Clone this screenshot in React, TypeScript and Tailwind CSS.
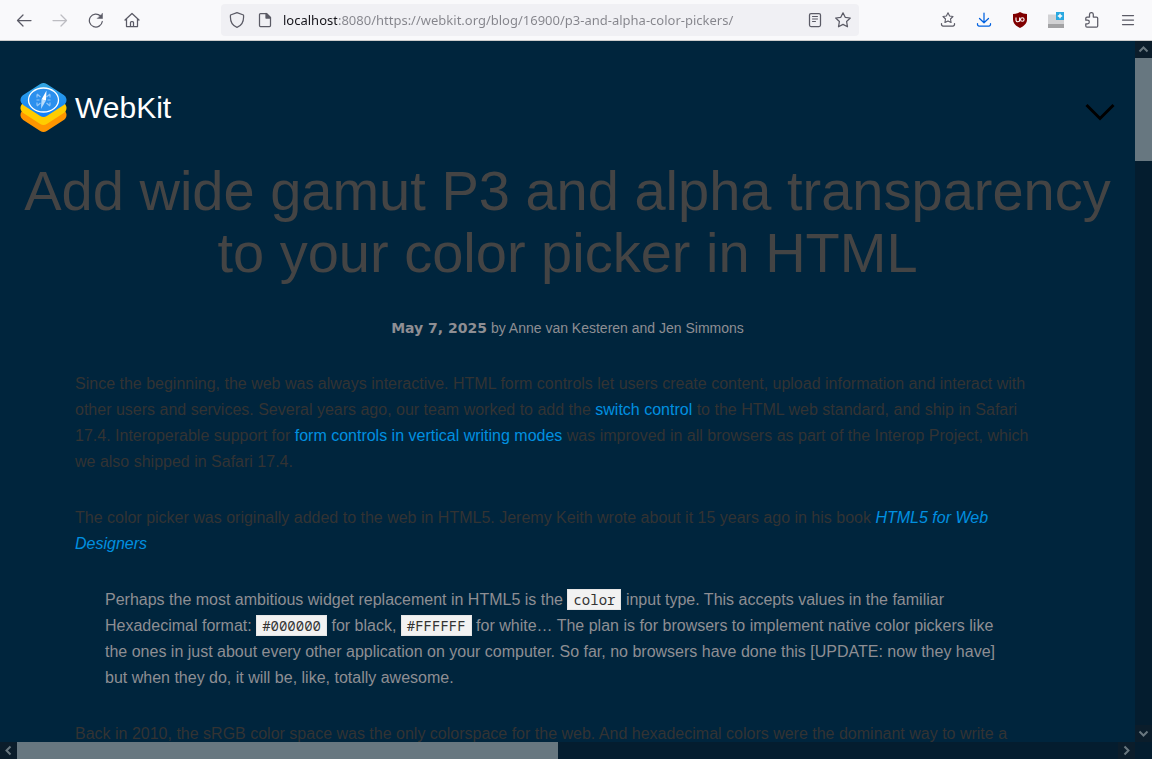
import React from 'react';

const LAYER = 'M23.500 7L40.500 18L23.500 29L6.500 18Z';

function WebKitLogo() {
  return (
    <svg viewBox="0 0 47 52" className="w-[47px] h-[52px] shrink-0" aria-hidden="true">
      <defs>
        <linearGradient id="sky" gradientUnits="userSpaceOnUse" x1="0" y1="0" x2="0" y2="36">
          <stop offset="0" stopColor="#35a8e0" />
          <stop offset="1" stopColor="#0a7bff" />
        </linearGradient>
      </defs>
      <g strokeWidth="12" strokeLinejoin="round">
        <path d={LAYER} transform="translate(0 15)" fill="#ff9500" stroke="#ff9500" />
        <path d={LAYER} transform="translate(0 8)" fill="#ffcc00" stroke="#ffcc00" />
        <path d={LAYER} fill="url(#sky)" stroke="url(#sky)" />
      </g>
      <ellipse cx="23.5" cy="18" rx="15" ry="12" fill="#2b90ee" stroke="#fff" strokeWidth="1.3" />
      <path
        d="M17 12l3.5 3M30 12l-3.5 3M17 24l3.5-3M30 24l-3.5-3M17 12.5v3M30 12.5v3M17 23.500v-3M30 23.500v-3M16.500 18h3M27.500 18h3"
        stroke="#8fc5f8"
        strokeWidth="1.2"
        fill="none"
      />
      <path d="M26.500 8.500L26 18.500L21.500 17.500Z" fill="#fff" />
      <path d="M21 27L21.500 17.500L26 18.500Z" fill="#b9dcfb" />
    </svg>
  );
}

type IconProps = { children: React.ReactNode; className?: string };

function Icon({ children, className = 'text-[#5b5b66]' }: IconProps) {
  return (
    <svg
      viewBox="0 0 16 16"
      className={`size-4 shrink-0 ${className}`}
      fill="none"
      stroke="currentColor"
      strokeWidth="1.25"
      strokeLinecap="round"
      strokeLinejoin="round"
      aria-hidden="true"
    >
      {children}
    </svg>
  );
}

function ToolButton({ label, children, disabled }: { label: string; children: React.ReactNode; disabled?: boolean }) {
  return (
    <button type="button" aria-label={label} title={label} disabled={disabled} className="flex size-8 items-center justify-center rounded">
      {children}
    </button>
  );
}

function Toolbar() {
  return (
    <header className="flex h-[41px] shrink-0 items-center border-b border-[#cccccc] bg-[#f9f9fb] px-2">
      <nav className="flex gap-1" aria-label="Navigation">
        <ToolButton label="Back">
          <Icon><path d="M15 8.500H1.500M7 3L1.500 8.500L7 14" /></Icon>
        </ToolButton>
        <ToolButton label="Forward" disabled>
          <Icon className="text-[#bdbdc2]"><path d="M1 8.500H14.500M9 3L14.500 8.500L9 14" /></Icon>
        </ToolButton>
        <ToolButton label="Reload">
          <Icon>
            <path d="M14.300 9.500A6.500 6.500 0 1 1 12.500 4" />
            <path d="M14.500 1.500V6.500H9.500Z" fill="currentColor" strokeWidth="0.5" />
          </Icon>
        </ToolButton>
        <ToolButton label="Home">
          <Icon>
            <path d="M1 8L8 1.500L15 8M2.500 7V14.500H13.500V7M6.500 14V10.500a1 1 0 0 1 1-1h1a1 1 0 0 1 1 1V14" />
          </Icon>
        </ToolButton>
      </nav>

      <div className="ml-[73px] flex h-8 w-[638px] min-w-0 shrink items-center rounded bg-[#f0f0f4] px-2">
        <Icon>
          <path d="M8 .7L14.500 3C15 8.500 13 13.500 8 15.300C3 13.500 1 8.500 1.500 3Z" />
        </Icon>
        <Icon className="ml-3 text-[#5b5b66]">
          <path d="M3.500 1.500H9.500L13.500 5.500V13.500a1 1 0 0 1-1 1H3.500a1 1 0 0 1-1-1V2.500a1 1 0 0 1 1-1Z" />
          <path d="M9 1.500V6H13.500Z" fill="currentColor" />
        </Icon>
        <input
          type="text"
          aria-label="Address"
          defaultValue="localhost:8080/https://webkit.org/blog/16900/p3-and-alpha-color-pickers/"
          className="ml-[10px] min-w-0 flex-1 bg-[linear-gradient(to_right,#15141a_54px,#84848b_54px)] bg-clip-text pt-[2px] font-['Noto_Sans',sans-serif] text-[13px] text-transparent caret-black outline-none"
        />
        <button type="button" aria-label="Reader view" className="flex size-7 items-center justify-center">
          <Icon>
            <rect x="2.500" y="1.500" width="11" height="13" rx="1.500" />
            <path d="M5.500 4.500H10.500M5.500 7H10.500M5.500 9.500H8.500" strokeWidth="1" />
          </Icon>
        </button>
        <button type="button" aria-label="Bookmark" className="-mr-[6px] flex size-7 items-center justify-center">
          <Icon>
            <path d="M8 .8L10.200 5.300L15.300 6L11.600 9.500L12.500 14.800L8 12.400L3.500 14.800L4.400 9.500L.7 6L5.800 5.300Z" />
          </Icon>
        </button>
      </div>

      <div className="ml-auto flex gap-1">
        <ToolButton label="Bookmarks">
          <Icon>
            <path d="M8 .8L9.600 4L13 4.500L10.500 7L11.100 10.500L8 8.900L4.900 10.500L5.500 7L3 4.500L6.400 4Z" strokeWidth="1.1" />
            <path d="M1.500 11.500V12.500a1.500 1.500 0 0 0 1.500 1.500H13a1.500 1.500 0 0 0 1.500-1.500V11.500" />
          </Icon>
        </ToolButton>
        <ToolButton label="Downloads">
          <Icon className="text-[#0061e0]">
            <path d="M8 1V10.500M3.500 6.500L8 10.800L12.500 6.500M1.500 11.500V12.500a1.500 1.500 0 0 0 1.500 1.500H13a1.500 1.500 0 0 0 1.500-1.500V11.500" />
          </Icon>
        </ToolButton>
        <ToolButton label="uBlock Origin">
          <svg viewBox="0 0 16 16" className="size-4" aria-hidden="true">
            <path d="M8 0C10 1.300 12.500 2 15 2V7.500C15 11.500 12 14 8 16C4 14 1 11.500 1 7.500V2C3.500 2 6 1.300 8 0Z" fill="#800000" />
            <path d="M4 5.500V8a1.600 1.600 0 0 0 3.600 0V5.500M7.600 5.500V9.400" fill="none" stroke="#fff" strokeWidth="1.100" />
            <circle cx="10.300" cy="7.500" r="1.800" fill="none" stroke="#fff" strokeWidth="1.100" />
          </svg>
        </ToolButton>
        <ToolButton label="New window">
          <svg viewBox="0 0 16 16" className="size-4" aria-hidden="true">
            <path d="M0 2.500H16V12H0Z" fill="#d2d2d4" />
            <path d="M0 12H16V16H0Z" fill="#a2a2a4" />
            <path d="M8 0H16V8H8Z" fill="#2aa8e0" />
            <path d="M12 1.800V6.200M9.800 4H14.200" stroke="#fff" strokeWidth="1.400" />
          </svg>
        </ToolButton>
        <ToolButton label="Extensions">
          <Icon>
            <path d="M5.500 5V2.500a1.900 1.900 0 0 1 3.800 0V5H12.500a1.200 1.200 0 0 1 1.200 1.200V14a1.200 1.200 0 0 1-1.200 1.200H3a1.200 1.200 0 0 1-1.200-1.200V11.800H3.500a1.700 1.700 0 0 0 0-3.600H1.800V6.200A1.200 1.200 0 0 1 3 5Z" />
          </Icon>
        </ToolButton>
        <ToolButton label="Menu">
          <Icon><path d="M2.500 3.500H13.500M2.500 8H13.500M2.500 12.500H13.500" /></Icon>
        </ToolButton>
      </div>
    </header>
  );
}

const ARROWS = {
  up: 'M4.500 10.500L8.500 6.500L12.500 10.500',
  down: 'M4.500 6.500L8.500 10.500L12.500 6.500',
  left: 'M10.500 4.500L6.500 8.500L10.500 12.500',
  right: 'M6.500 4.500L10.500 8.500L6.500 12.500',
};

function ScrollArrow({ dir }: { dir: keyof typeof ARROWS }) {
  return (
    <button type="button" aria-label={`Scroll ${dir}`} className="size-[17px] shrink-0 bg-[#0b1d2b]">
      <svg viewBox="0 0 17 17" className="size-full" fill="none" stroke="#69777f" strokeWidth="2" aria-hidden="true">
        <path d={ARROWS[dir]} />
      </svg>
    </button>
  );
}

function Code({ children }: { children: React.ReactNode }) {
  return (
    <code className="border border-[#e6e6e6] bg-[#f2f2f2] px-[5px] font-['Noto_Sans_Mono','DejaVu_Sans_Mono',monospace] text-[14px] leading-4 text-[#333333]">
      {children}
    </code>
  );
}

function TextLink({ children }: { children: React.ReactNode }) {
  return <a href="#" className="text-[#0090e0]">{children}</a>;
}

function Article() {
  return (
    <article>
      <h1 className="mt-[26px] px-5 text-center text-[56px] leading-[62px] text-[#444444]">
        Add wide gamut P3 and alpha transparency to your color picker in HTML
      </h1>
      <p className="mt-8 text-center text-[14px] leading-6 text-[#8e8e93]">
        <time className="font-['DejaVu_Sans',sans-serif] font-bold">May 7, 2025</time> by Anne van Kesteren and Jen Simmons
      </p>
      <div className="mt-[31px] max-w-[1035px] space-y-[30px] pl-[75px] text-[16px] leading-[26px] text-[#333333]">
        <p>
          Since the beginning, the web was always interactive. HTML form controls let users create content, upload
          information and interact with other users and services. Several years ago, our team worked to add
          the <TextLink>switch control</TextLink> to the HTML web standard, and ship in Safari 17.4. Interoperable
          support for <TextLink>form controls in vertical writing modes</TextLink> was improved in all browsers as part
          of the Interop Project, which we also shipped in Safari 17.4.
        </p>
        <p>
          The color picker was originally added to the web in HTML5. Jeremy Keith wrote about it 15 years ago in his
          book <TextLink><em>HTML5 for Web Designers</em></TextLink>
        </p>
        <blockquote className="px-[30px] text-[#8e8e93]">
          Perhaps the most ambitious widget replacement in HTML5 is the <Code>color</Code> input type. This accepts
          values in the familiar Hexadecimal format: <Code>#000000</Code> for black, <Code>#FFFFFF</Code> for white…
          The plan is for browsers to implement native color pickers like the ones in just about every other
          application on your computer. So far, no browsers have done this [UPDATE: now they have] but when they do, it
          will be, like, totally awesome.
        </blockquote>
        <p>
          Back in 2010, the sRGB color space was the only colorspace for the web. And hexadecimal colors were the
          dominant way to write a
        </p>
      </div>
    </article>
  );
}

export default function App() {
  return (
    <div className="flex h-screen flex-col overflow-hidden bg-[#00253d] font-['Liberation_Sans',Arial,sans-serif]">
      <Toolbar />
      <div className="flex min-h-0 flex-1">
        <main className="min-w-0 flex-1 overflow-hidden">
          <div className="flex items-center justify-between px-5 pt-[41px]">
            <a href="#" className="flex items-center gap-2 text-[30px] leading-none text-white">
              <WebKitLogo />
              WebKit
            </a>
            <button type="button" aria-label="Open menu" className="mt-2">
              <svg viewBox="0 0 30 18" className="h-[18px] w-[30px]" fill="none" stroke="#000" strokeWidth="3" aria-hidden="true">
                <path d="M1.500 2L15 15.500L28.500 2" />
              </svg>
            </button>
          </div>
          <Article />
        </main>
        <div className="flex w-[17px] shrink-0 flex-col bg-[#041d2f]">
          <ScrollArrow dir="up" />
          <div className="h-[103px] bg-[#677780]" />
          <div className="mt-auto flex">
            <ScrollArrow dir="down" />
          </div>
        </div>
      </div>
      <div className="flex h-[17px] shrink-0 bg-[#041d2f] pr-[17px]">
        <ScrollArrow dir="left" />
        <div className="w-[541px] bg-[#677780]" />
        <div className="ml-auto flex">
          <ScrollArrow dir="right" />
        </div>
      </div>
    </div>
  );
}
